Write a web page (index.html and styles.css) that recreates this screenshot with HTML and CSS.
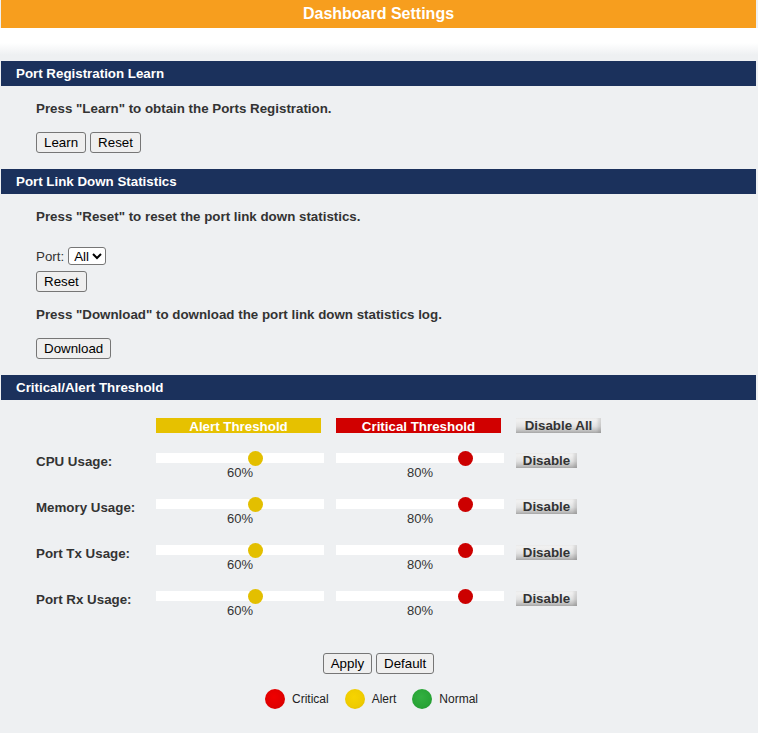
FILE: index.html
```html
<!DOCTYPE html>
<html lang="en">
<head>
<meta charset="utf-8">
<title>Dashboard Settings</title>
<link rel="stylesheet" href="styles.css">
</head>
<body>
<div class="page">
  <header class="topbar">Dashboard Settings</header>
  <div class="band"></div>

  <section class="sec">
    <h2 class="sec-title">Port Registration Learn</h2>
    <div class="sec-body">
      <p class="note">Press "Learn" to obtain the Ports Registration.</p>
      <div class="btns gap15"><button class="btn">Learn</button><button class="btn">Reset</button></div>
    </div>
  </section>

  <section class="sec">
    <h2 class="sec-title">Port Link Down Statistics</h2>
    <div class="sec-body">
      <p class="note">Press "Reset" to reset the port link down statistics.</p>
      <div class="port-row"><label class="port-label" for="port">Port:</label><select id="port" class="sel"><option>All</option></select></div>
      <div class="btns gap6"><button class="btn">Reset</button></div>
      <p class="note gap15">Press "Download" to download the port link down statistics log.</p>
      <div class="btns gap15"><button class="btn">Download</button></div>
    </div>
  </section>

  <section class="sec">
    <h2 class="sec-title">Critical/Alert Threshold</h2>
    <div class="thr-body">
      <div class="thr-grid head">
        <div></div>
        <div class="tag alert">Alert Threshold</div>
        <div class="tag crit">Critical Threshold</div>
        <div><button class="gbtn wide">Disable All</button></div>
      </div>

      <div class="thr-grid row">
        <div class="rlabel">CPU Usage:</div>
        <div class="cell"><input class="range r-alert" type="range" min="0" max="100" value="60"><div class="pct">60%</div></div>
        <div class="cell"><input class="range r-crit" type="range" min="0" max="100" value="80"><div class="pct">80%</div></div>
        <div><button class="gbtn">Disable</button></div>
      </div>
      <div class="thr-grid row">
        <div class="rlabel">Memory Usage:</div>
        <div class="cell"><input class="range r-alert" type="range" min="0" max="100" value="60"><div class="pct">60%</div></div>
        <div class="cell"><input class="range r-crit" type="range" min="0" max="100" value="80"><div class="pct">80%</div></div>
        <div><button class="gbtn">Disable</button></div>
      </div>
      <div class="thr-grid row">
        <div class="rlabel">Port Tx Usage:</div>
        <div class="cell"><input class="range r-alert" type="range" min="0" max="100" value="60"><div class="pct">60%</div></div>
        <div class="cell"><input class="range r-crit" type="range" min="0" max="100" value="80"><div class="pct">80%</div></div>
        <div><button class="gbtn">Disable</button></div>
      </div>
      <div class="thr-grid row">
        <div class="rlabel">Port Rx Usage:</div>
        <div class="cell"><input class="range r-alert" type="range" min="0" max="100" value="60"><div class="pct">60%</div></div>
        <div class="cell"><input class="range r-crit" type="range" min="0" max="100" value="80"><div class="pct">80%</div></div>
        <div><button class="gbtn">Disable</button></div>
      </div>

      <div class="actions"><button class="btn">Apply</button><button class="btn">Default</button></div>

      <div class="legend">
        <span class="dot d-red"></span><span class="ltext">Critical</span>
        <span class="dot d-yellow"></span><span class="ltext">Alert</span>
        <span class="dot d-green"></span><span class="ltext">Normal</span>
      </div>
    </div>
  </section>
</div>
</body>
</html>
```

FILE: styles.css
```css
* { box-sizing: border-box; }
html, body { margin: 0; padding: 0; }
body {
  background: #eef0f2;
  font-family: "Liberation Sans", Arial, sans-serif;
  color: #333;
  width: 758px;
  height: 733px;
  overflow: hidden;
}
.page {
  margin: 0 2px 0 1px;
  display: flex;
  flex-direction: column;
}
.topbar {
  height: 28px;
  line-height: 28px;
  background: #f79e1e;
  color: #fff;
  font-weight: bold;
  font-size: 16px;
  text-align: center;
}
.band {
  height: 33px;
  margin: 0 -2px 0 -1px;
  background: linear-gradient(to bottom, #ffffff 0px, #ffffff 15px, #eef0f2 27px, #eef0f2 33px);
}
.sec { display: flex; flex-direction: column; }
.sec-title {
  margin: 0;
  height: 25px;
  line-height: 25px;
  background: #1b315c;
  color: #fff;
  font-size: 13.33px;
  font-weight: bold;
  padding-left: 15px;
}
.sec-body {
  padding: 15px 0 16px 35px;
  display: flex;
  flex-direction: column;
  align-items: flex-start;
}
.note {
  margin: 0;
  font-size: 13.33px;
  line-height: 16px;
  font-weight: bold;
  color: #333;
}
.gap15 { margin-top: 15px; }
.gap6 { margin-top: 6px; }
.btns { display: flex; gap: 4px; }
.btn {
  font-family: "Liberation Sans", Arial, sans-serif;
  font-size: 13.33px;
  line-height: 15px;
  height: 21px;
  padding: 2px 7px;
  color: #000;
  background: #efefef;
  border: 1px solid #767676;
  border-radius: 3px;
}
.port-row {
  margin-top: 22px;
  display: flex;
  align-items: center;
  gap: 4px;
  height: 18px;
}
.port-label { font-size: 13.33px; color: #333; }
.sel {
  font-family: "Liberation Sans", Arial, sans-serif;
  font-size: 13.33px;
  height: 18px;
  padding: 0 0 0 1px;
  color: #000;
  background: #fff;
  border: 1px solid #767676;
  border-radius: 3px;
}

.thr-body {
  padding-top: 18px;
  display: flex;
  flex-direction: column;
}
.thr-grid {
  display: grid;
  grid-template-columns: 108px 168px 168px auto;
  column-gap: 12px;
  padding-left: 35px;
}
.thr-grid.head { height: 15px; }
.tag {
  width: 165px;
  height: 15px;
  line-height: 17px;
  text-align: center;
  color: #fff;
  font-weight: bold;
  font-size: 13.33px;
}
.alert { background: #e6c100; }
.crit { background: #d10000; }
.gbtn {
  display: block;
  width: 61px;
  height: 15px;
  padding: 0;
  border: 0;
  font-family: "Liberation Sans", Arial, sans-serif;
  font-size: 13.33px;
  font-weight: bold;
  line-height: 15px;
  color: #333;
  text-align: center;
  background: linear-gradient(to bottom, #f7f7f7 0%, #e2e2e2 55%, #b0b0b0 100%);
  box-shadow: inset -3px 0 3px rgba(0,0,0,0.12);
}
.gbtn.wide { width: 85px; }

.row { height: 28px; margin-top: 18px; }
.thr-grid.head + .row { margin-top: 20px; }
.rlabel {
  font-size: 13.33px;
  font-weight: bold;
  line-height: 16px;
  padding-top: 1px;
  white-space: nowrap;
  color: #333;
}
.cell { display: flex; flex-direction: column; width: 168px; }
.range {
  -webkit-appearance: none;
  appearance: none;
  display: block;
  width: 168px;
  height: 10px;
  margin: 0;
  background: #fff;
  outline: none;
}
.range::-webkit-slider-runnable-track {
  height: 10px;
  background: #fff;
  border: 0;
}
.range::-webkit-slider-thumb {
  -webkit-appearance: none;
  appearance: none;
  width: 15px;
  height: 15px;
  border-radius: 50%;
  border: 0;
  margin-top: -2.5px;
}
.r-alert::-webkit-slider-thumb { background: #e3bf00; }
.r-crit::-webkit-slider-thumb { background: #cc0000; }
.pct {
  margin-top: 2px;
  font-size: 13px;
  line-height: 16px;
  text-align: center;
  color: #333;
}

.actions {
  margin-top: 34px;
  display: flex;
  justify-content: center;
  gap: 4px;
}
.legend {
  margin-top: 15px;
  display: flex;
  justify-content: center;
  align-items: center;
  height: 20px;
  padding-right: 14px;
}
.dot {
  width: 20px;
  height: 20px;
  border-radius: 50%;
  margin-right: 7px;
}
.ltext {
  font-size: 12px;
  color: #222;
  margin-right: 16px;
}
.ltext:last-child { margin-right: 0; }
.d-red { background: radial-gradient(circle at 45% 40%, #f00000 0%, #e00000 60%, #c80000 100%); }
.d-yellow { background: radial-gradient(circle at 45% 40%, #f7d400 0%, #eecb00 60%, #dcb400 100%); }
.d-green { background: radial-gradient(circle at 45% 40%, #33b041 0%, #28a436 60%, #1e8f2c 100%); }
```
